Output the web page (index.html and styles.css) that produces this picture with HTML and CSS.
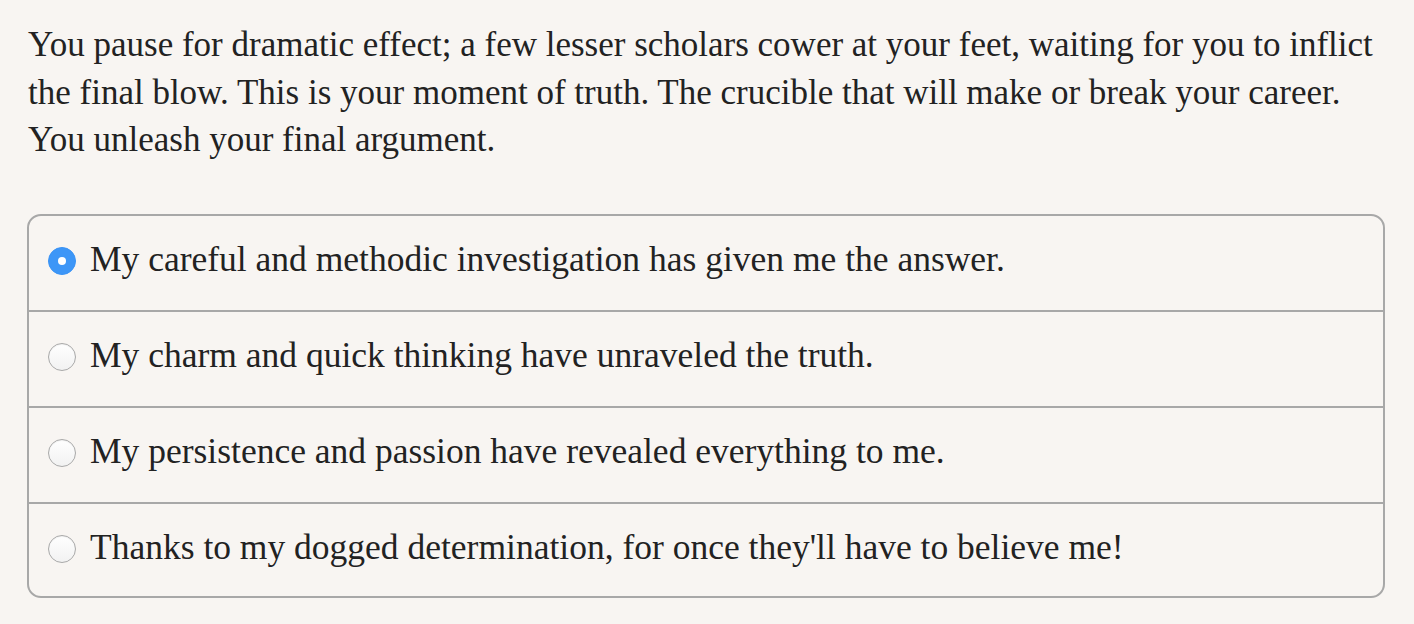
FILE: index.html
```html
<!DOCTYPE html>
<html lang="en">
<head>
<meta charset="utf-8">
<title>Final argument</title>
<link rel="stylesheet" href="styles.css">
</head>
<body>
<main class="page">
  <p class="story">You pause for dramatic effect; a few lesser scholars cower at your feet, waiting for you to inflict the final blow. This is your moment of truth. The crucible that will make or break your career. You unleash your final argument.</p>
  <form class="choices">
    <label class="choice"><input class="radio" type="radio" name="arg" checked><span class="choice-text">My careful and methodic investigation has given me the answer.</span></label>
    <label class="choice"><input class="radio" type="radio" name="arg"><span class="choice-text">My charm and quick thinking have unraveled the truth.</span></label>
    <label class="choice"><input class="radio" type="radio" name="arg"><span class="choice-text">My persistence and passion have revealed everything to me.</span></label>
    <label class="choice"><input class="radio" type="radio" name="arg"><span class="choice-text">Thanks to my dogged determination, for once they'll have to believe me!</span></label>
  </form>
</main>
</body>
</html>
```
FILE: styles.css
```css
html, body {
  margin: 0;
  padding: 0;
  background: #f8f5f2;
}
body {
  font-family: "Liberation Serif", "Times New Roman", serif;
  font-size: 35px;
  line-height: 47.5px;
  color: #222222;
}
.page {
  padding: 21px 29px 0 27px;
}
.story {
  margin: 0 0 50px 1px;
}
.choices {
  display: flex;
  flex-direction: column;
  border: 2px solid #a8a8a8;
  border-radius: 14px;
  margin: 0;
}
.choice {
  display: flex;
  align-items: flex-start;
  gap: 14px;
  padding: 19px 19px 27px;
  border-top: 2px solid #a8a8a8;
  cursor: pointer;
}
.choice:first-child {
  border-top: none;
}
.choice:last-child {
  padding-bottom: 25px;
}
.choice-text {
  font-size: 35.5px;
  line-height: 48px;
}
.radio {
  appearance: none;
  -webkit-appearance: none;
  margin: 12px 0 0;
  width: 28px;
  height: 28px;
  flex: 0 0 28px;
  border-radius: 50%;
  border: 1px solid #a9a9a9;
  background: linear-gradient(#ffffff, #f2f2f2);
  box-shadow: inset 0 1px 1px rgba(0,0,0,0.06);
  position: relative;
}
.radio:checked {
  border-color: #3a93f5;
  background: #3d96f7;
  box-shadow: none;
}
.radio:checked::after {
  content: "";
  position: absolute;
  left: 9px;
  top: 9px;
  width: 8px;
  height: 8px;
  border-radius: 50%;
  background: #ffffff;
}
```
